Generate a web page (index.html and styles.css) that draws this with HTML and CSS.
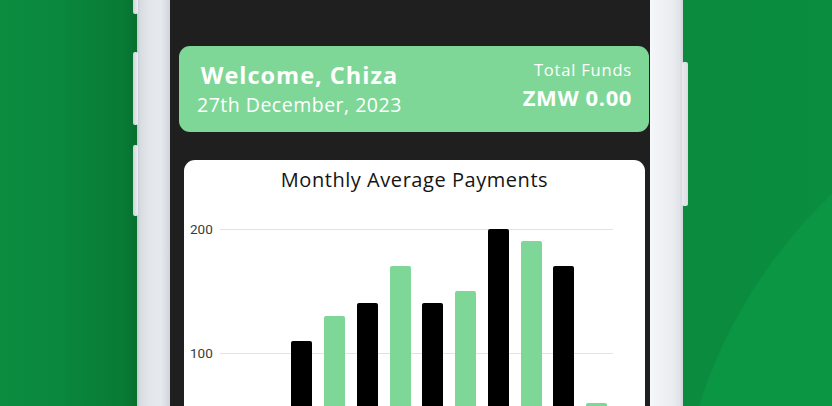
FILE: index.html
```html
<!DOCTYPE html>
<html lang="en">
<head>
<meta charset="utf-8">
<title>Dashboard</title>
<link rel="stylesheet" href="styles.css">
</head>
<body>
<div class="stage">
  <div class="phone">
    <span class="btn btn-l1"></span>
    <span class="btn btn-l2"></span>
    <span class="btn btn-l3"></span>
    <span class="btn btn-r1"></span>
    <div class="screen">
      <div class="welcome-card">
        <div class="welcome-col">
          <div class="welcome-name">Welcome, Chiza</div>
          <div class="welcome-date">27th December, 2023</div>
        </div>
        <div class="funds-col">
          <div class="funds-label">Total Funds</div>
          <div class="funds-value">ZMW 0.00</div>
        </div>
      </div>
      <div class="chart-card">
        <div class="chart-title">Monthly Average Payments</div>
        <div class="chart">
          <div class="yaxis">
            <div class="ylabel">200</div>
            <div class="ylabel">100</div>
          </div>
          <div class="plot">
            <div class="slot"><div class="bar dark" style="height:0px"></div></div>
            <div class="slot"><div class="bar light" style="height:0px"></div></div>
            <div class="slot"><div class="bar dark" style="height:136.4px"></div></div>
            <div class="slot"><div class="bar light" style="height:161.2px"></div></div>
            <div class="slot"><div class="bar dark" style="height:173.6px"></div></div>
            <div class="slot"><div class="bar light" style="height:210.8px"></div></div>
            <div class="slot"><div class="bar dark" style="height:173.6px"></div></div>
            <div class="slot"><div class="bar light" style="height:186px"></div></div>
            <div class="slot"><div class="bar dark" style="height:248px"></div></div>
            <div class="slot"><div class="bar light" style="height:235.6px"></div></div>
            <div class="slot"><div class="bar dark" style="height:210.8px"></div></div>
            <div class="slot"><div class="bar light" style="height:74.4px"></div></div>
          </div>
        </div>
      </div>
    </div>
  </div>
</div>
</body>
</html>
```

FILE: styles.css
```css
* { box-sizing: border-box; }

html, body {
  margin: 0;
  padding: 0;
}

body {
  width: 832px;
  height: 406px;
  overflow: hidden;
  font-family: "Open Sans", "DejaVu Sans", sans-serif;
}

.stage {
  width: 832px;
  height: 406px;
  overflow: hidden;
  padding-left: 137px;
  background:
    radial-gradient(circle 506px at 1180px 560px, #0b9643 0, #0b9643 99.6%, rgba(11,150,67,0) 100%),
    linear-gradient(to right, #0b8c3f 0, #0a883d 60px, #087a34 125px, #076f2f 137px, #0a8b3e 683px, #0a8d3f 832px);
}

.phone {
  position: relative;
  width: 546px;
  height: 520px;
  padding: 0 33px;
  background: linear-gradient(to right,
    #c3c7cf 0, #d8dbe1 3px, #e3e6ea 12px, #e6e9ed 24px, #d3d6dc 32px, #cdd0d6 33px,
    #f6f7f9 513px, #f1f2f5 522px, #eaecef 536px, #dfe2e7 543px, #cfd3d9 546px);
}

.btn {
  position: absolute;
  width: 5px;
  background: linear-gradient(to right, #cfd3d9, #eceef2);
  border-radius: 2px;
}
.btn-l1 { left: -4px; top: -10px; height: 24px; }
.btn-l2 { left: -4px; top: 52px; height: 73px; }
.btn-l3 { left: -4px; top: 145px; height: 71px; }
.btn-r1 { right: -5px; top: 62px; height: 144px; width: 6px; background: linear-gradient(to right, #e9ebee, #d9dce1); }

.screen {
  width: 480px;
  height: 520px;
  background: #1f1f1f;
  padding-top: 46px;
  overflow: hidden;
}

.welcome-card {
  margin: 0 1px 0 9px;
  height: 86px;
  background: #7ed797;
  border-radius: 11px;
  display: flex;
  justify-content: space-between;
  align-items: flex-start;
  padding: 14px 18px 0 18px;
  color: #ffffff;
}

.welcome-col {
  display: flex;
  flex-direction: column;
  align-items: center;
}

.welcome-name {
  font-weight: 700;
  font-size: 23.5px;
  letter-spacing: 1px;
  line-height: 30px;
}

.welcome-date {
  font-size: 19.5px;
  letter-spacing: 0.5px;
  line-height: 30px;
}

.funds-col {
  display: flex;
  flex-direction: column;
  align-items: flex-end;
  margin-top: -1px;
  margin-right: -1px;
}

.funds-label {
  font-size: 16.5px;
  letter-spacing: 0.8px;
  line-height: 22px;
}

.funds-value {
  font-weight: 700;
  font-size: 22px;
  letter-spacing: 0.6px;
  line-height: 30px;
  margin-top: 1px;
}

.chart-card {
  margin: 28px 5px 0 14px;
  height: 340px;
  background: #ffffff;
  border-radius: 11px 11px 0 0;
  padding-top: 6px;
}

.chart-title {
  text-align: center;
  font-size: 20px;
  letter-spacing: 0.55px;
  line-height: 27px;
  color: #141414;
}

.chart {
  display: flex;
  margin-top: 36px;
}

.yaxis {
  width: 36px;
  padding-left: 6px;
  display: flex;
  flex-direction: column;
}

.ylabel {
  height: 124px;
  margin-top: -8px;
  margin-bottom: 8px;
  font-family: Roboto, "Open Sans", sans-serif;
  font-size: 13.5px;
  line-height: 16px;
  color: #3a3a3a;
}

.plot {
  width: 393px;
  height: 248px;
  display: flex;
  align-items: flex-end;
  background: repeating-linear-gradient(to bottom, #e3e3e6 0, #e3e3e6 1px, transparent 1px, transparent 124px);
}

.slot {
  flex: 1;
  display: flex;
  justify-content: center;
  align-items: flex-end;
}

.bar {
  width: 21px;
  border-radius: 2px 2px 0 0;
}

.bar.dark { background: #000000; }
.bar.light { background: #7ed797; }
```
